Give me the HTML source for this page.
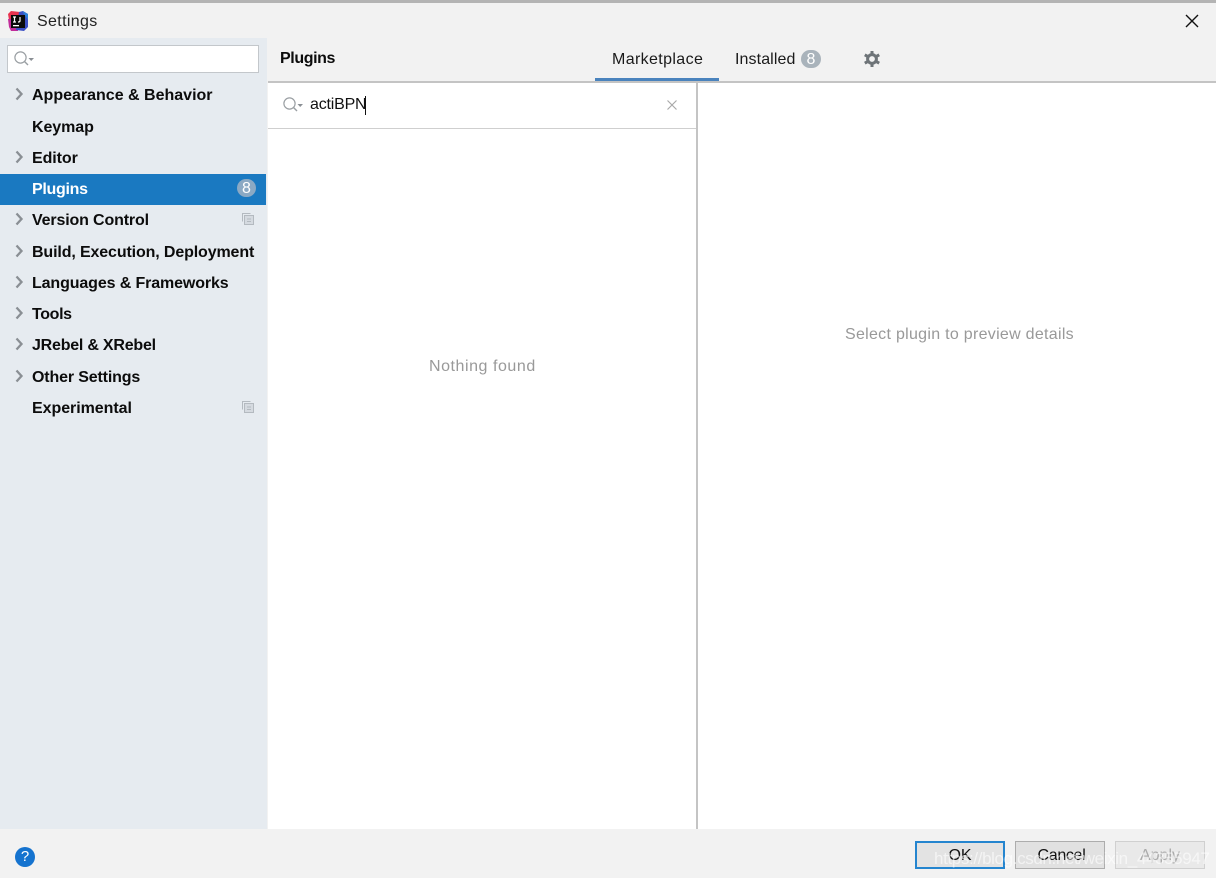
<!DOCTYPE html>
<html lang="en"><head><meta charset="utf-8"><title>Settings</title>
<style>
html,body{margin:0;padding:0}
body{width:1216px;height:878px;overflow:hidden;position:relative;background:#f2f2f2;font-family:"Liberation Sans","DejaVu Sans",sans-serif;color:#111}
div,span{position:absolute;white-space:nowrap}
svg{position:absolute;overflow:visible}
.it{left:32px;font-weight:bold;font-size:16px;line-height:20px;color:#0c0c0c}
.ar{left:13px}
</style></head><body>
<div style="left:0;top:0;width:1216px;height:3px;background:#b4b4b4"></div>
<div style="left:0;top:38px;width:267px;height:791px;background:#e6ebf0"></div>
<div style="left:268px;top:83px;width:948px;height:746px;background:#fff"></div>
<div style="left:268px;top:81px;width:948px;height:2px;background:#c4c4c4"></div>
<div style="left:268px;top:128px;width:428px;height:1px;background:#cfcfcf"></div>
<div style="left:696px;top:83px;width:2px;height:746px;background:#c4c4c4"></div>

<svg style="left:8px;top:11px" width="21" height="20" viewBox="0 0 21 20">
<path d="M3 0L12 1 12 8 1 9 0 3Z" fill="#e8334f"/><path d="M0 8L9 8 10 20 3 20 1 16Z" fill="#c22c9a"/><path d="M11 1L15 0 20 3 20 16 16 20 8 19Z" fill="#3b4fc4"/><path d="M14 0L20 3 20 9Z" fill="#2a7fd8"/>
<rect x="3" y="4" width="14" height="13" fill="#0a0a0a"/><rect x="5" y="14" width="6" height="1.3" fill="#fff"/>
<path d="M5 6H8M6.5 6V11M5 11H8M12 6V10Q12 11 10 11" stroke="#fff" stroke-width="1.2" fill="none"/></svg>
<div style="left:37px;top:12px;font-size:16px;line-height:20px;color:#222;letter-spacing:.35px">Settings</div>
<svg style="left:1185px;top:14px" width="14" height="14"><path d="M1 1L13 13M13 1L1 13" stroke="#111" stroke-width="1.4"/></svg>

<div style="left:7px;top:45px;width:250px;height:26px;background:#fff;border:1px solid #c3c7cb"></div>
<svg style="left:14px;top:51px" width="22" height="16"><circle cx="6.5" cy="6.5" r="5.6" fill="none" stroke="#9a9fa3" stroke-width="1.2"/><path d="M10.5 10.5L14 14" stroke="#9a9fa3" stroke-width="1.4"/><path d="M14.5 7H20L17.2 10Z" fill="#8a8f94"/></svg>

<div style="left:0;top:174px;width:266px;height:31px;background:#1a79c1"></div>

<svg class="ar" style="top:87px" width="10" height="14"><path d="M3.5 1.5L8.5 7 3.5 12.5" fill="none" stroke="#8a8f94" stroke-width="2.3"/></svg>
<svg class="ar" style="top:150px" width="10" height="14"><path d="M3.5 1.5L8.5 7 3.5 12.5" fill="none" stroke="#8a8f94" stroke-width="2.3"/></svg>
<svg class="ar" style="top:212px" width="10" height="14"><path d="M3.5 1.5L8.5 7 3.5 12.5" fill="none" stroke="#8a8f94" stroke-width="2.3"/></svg>
<svg class="ar" style="top:244px" width="10" height="14"><path d="M3.5 1.5L8.5 7 3.5 12.5" fill="none" stroke="#8a8f94" stroke-width="2.3"/></svg>
<svg class="ar" style="top:275px" width="10" height="14"><path d="M3.5 1.5L8.5 7 3.5 12.5" fill="none" stroke="#8a8f94" stroke-width="2.3"/></svg>
<svg class="ar" style="top:306px" width="10" height="14"><path d="M3.5 1.5L8.5 7 3.5 12.5" fill="none" stroke="#8a8f94" stroke-width="2.3"/></svg>
<svg class="ar" style="top:337px" width="10" height="14"><path d="M3.5 1.5L8.5 7 3.5 12.5" fill="none" stroke="#8a8f94" stroke-width="2.3"/></svg>
<svg class="ar" style="top:369px" width="10" height="14"><path d="M3.5 1.5L8.5 7 3.5 12.5" fill="none" stroke="#8a8f94" stroke-width="2.3"/></svg>

<div class="it" style="top:86px;letter-spacing:0">Appearance &amp; Behavior</div>
<div class="it" style="top:118px;letter-spacing:-.08px">Keymap</div>
<div class="it" style="top:149px;letter-spacing:-.08px">Editor</div>
<div class="it" style="top:180px;color:#fff;letter-spacing:-.3px">Plugins</div>
<div class="it" style="top:211px;letter-spacing:-.15px">Version Control</div>
<div class="it" style="top:243px;letter-spacing:-.13px">Build, Execution, Deployment</div>
<div class="it" style="top:274px;letter-spacing:-.12px">Languages &amp; Frameworks</div>
<div class="it" style="top:305px;letter-spacing:-.35px">Tools</div>
<div class="it" style="top:336px;letter-spacing:-.22px">JRebel &amp; XRebel</div>
<div class="it" style="top:368px;letter-spacing:-.15px">Other Settings</div>
<div class="it" style="top:399px;letter-spacing:-.05px">Experimental</div>

<div style="left:237px;top:179px;width:19px;height:18px;border-radius:9px;background:#8ba9c4;color:#fff;font-size:16px;line-height:19px;text-align:center">8</div>

<svg style="left:242px;top:213px" width="12" height="12"><path d="M.5 8.5V.5H8.5" fill="none" stroke="#b4bac0"/><rect x="2.5" y="2.5" width="9" height="9" fill="#d5dae0" stroke="#b4bac0"/><path d="M5 6H9M5 8.5H9" stroke="#b4bac0"/></svg>
<svg style="left:242px;top:401px" width="12" height="12"><path d="M.5 8.5V.5H8.5" fill="none" stroke="#b4bac0"/><rect x="2.5" y="2.5" width="9" height="9" fill="#d5dae0" stroke="#b4bac0"/><path d="M5 6H9M5 8.5H9" stroke="#b4bac0"/></svg>

<div style="left:280px;top:49px;font-weight:bold;font-size:16px;line-height:20px;color:#0c0c0c;letter-spacing:-.4px">Plugins</div>
<div style="left:612px;top:50px;font-size:16px;line-height:20px;color:#1a1a1a;letter-spacing:.37px">Marketplace</div>
<div style="left:595px;top:78px;width:124px;height:3px;background:#4a83bd"></div>
<div style="left:735px;top:50px;font-size:16px;line-height:20px;color:#1a1a1a;letter-spacing:.1px">Installed</div>
<div style="left:801px;top:50px;width:20px;height:18px;border-radius:9px;background:#a9b3bb;color:#fff;font-size:16px;line-height:19px;text-align:center">8</div>
<svg style="left:864px;top:51px" width="16" height="16" viewBox="0 0 16 16"><circle cx="8" cy="8" r="4.4" fill="none" stroke="#6e7478" stroke-width="3"/><g stroke="#6e7478" stroke-width="3"><path d="M8 0V3M8 13V16M.8 3.8L3.4 5.3M12.6 10.7L15.2 12.2M.8 12.2L3.4 10.7M12.6 5.3L15.2 3.8"/></g></svg>

<svg style="left:283px;top:97px" width="22" height="16"><circle cx="6.5" cy="6.5" r="5.6" fill="none" stroke="#9a9fa3" stroke-width="1.2"/><path d="M10.5 10.5L14 14" stroke="#9a9fa3" stroke-width="1.4"/><path d="M14.5 7H20L17.2 10Z" fill="#8a8f94"/></svg>
<div style="left:310px;top:95px;font-size:16px;line-height:20px;color:#111;letter-spacing:-.2px">actiBPN</div>
<div style="left:365px;top:96px;width:1px;height:19px;background:#111"></div>
<svg style="left:667px;top:100px" width="10" height="10"><path d="M.5.5L9.5 9.5M9.5.5L.5 9.5" stroke="#a9a9a9" stroke-width="1.2"/></svg>

<div style="left:429px;top:357px;font-size:16px;line-height:20px;color:#999;letter-spacing:.55px">Nothing found</div>
<div style="left:845px;top:325px;font-size:16px;line-height:20px;color:#999;letter-spacing:.29px">Select plugin to preview details</div>

<div style="left:15px;top:847px;width:20px;height:20px;border-radius:50%;background:#1573cf;color:#fff;font-size:15px;line-height:20px;text-align:center">?</div>

<div style="left:915px;top:841px;width:86px;height:24px;border:2px solid #2585cf;background:#e3e3e3;text-align:center;font-size:16px;line-height:26px;color:#111">OK</div>
<div style="left:1015px;top:841px;width:88px;height:26px;border:1px solid #adadad;background:#e1e1e1;text-align:center;font-size:16px;line-height:27px;color:#111;letter-spacing:-.3px;text-indent:3px">Cancel</div>
<div style="left:1115px;top:841px;width:88px;height:26px;border:1px solid #d0d0d0;background:#e9e9e9;text-align:center;font-size:16px;line-height:27px;color:#aaa">Apply</div>
<div style="left:934px;top:849px;font-size:17px;line-height:20px;color:rgba(255,255,255,.6);letter-spacing:-.37px">https://blog.csdn.net/weixin_44355947</div>
</body></html>
